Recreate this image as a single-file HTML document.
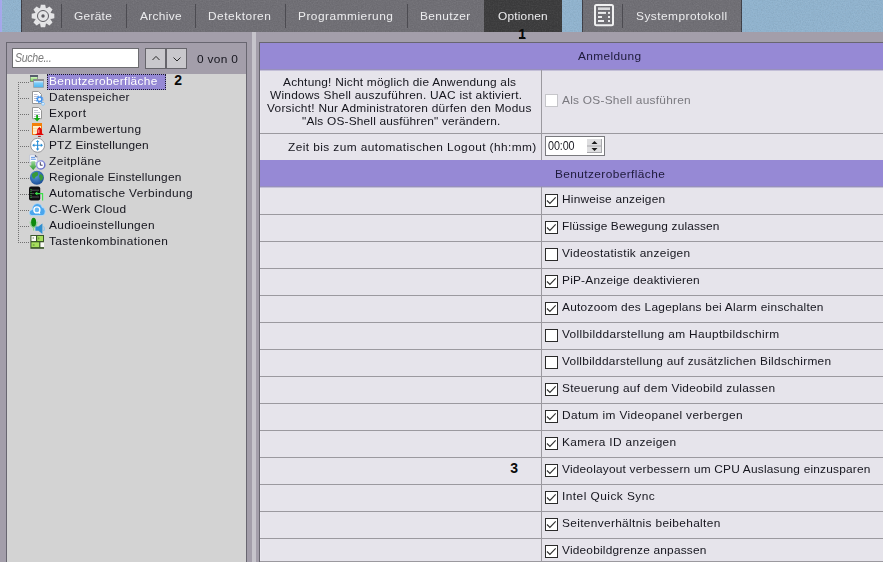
<!DOCTYPE html>
<html><head><meta charset="utf-8">
<style>
html,body{margin:0;padding:0;}
body{width:883px;height:562px;overflow:hidden;position:relative;background:#a39eaa;font-family:"Liberation Sans",sans-serif;font-size:11px;color:#15151d;}
div,span,svg{position:absolute;box-sizing:border-box;white-space:nowrap;}
.blue{top:0;height:32px;background:#91b4cf;}
.bar{top:0;height:32px;background:#706f75;}
.sep{top:4px;width:1px;height:24px;background:#4c4b51;}
.tab{line-height:16px;color:#ececee;}
.ti{line-height:16px;}
.hl{left:18px;width:12px;height:1px;background:repeating-linear-gradient(90deg,#707070 0 1px,transparent 1px 2px);}
.hdr{left:260px;width:640px;height:28px;background:linear-gradient(#9689d5 0,#9689d5 26px,#9790bc 26px,#9790bc 27px,#c3bfd8 27px,#c3bfd8 28px);}
.ln{left:260px;width:640px;height:1px;background:#9b999f;}
.cb{left:545px;width:13px;height:13px;border:1px solid #2b2b2b;background:#fff;}
.lb{line-height:16px;}
.h{color:#1d1a3a;line-height:16px;}
.w{line-height:13px;}
#root{left:0;top:0;width:883px;height:562px;overflow:hidden;}
</style></head><body>
<div id="root">
<div style="left:0;top:0;width:2px;height:32px;background:linear-gradient(90deg,#a3a5ee,#a9aae8)"></div>
<div class="blue" style="left:2px;width:19px"></div>
<div class="bar" style="left:21px;width:463px;border-left:1px solid #3e3e46"></div>
<div style="left:484px;top:0;width:78px;height:32px;background:#3c3c3d"></div>
<div class="blue" style="left:562px;width:20px"></div>
<div class="bar" style="left:582px;width:160px;border-left:1px solid #3e3e46;border-right:1px solid #3e3e46"></div>
<div class="blue" style="left:742px;width:141px"></div>
<svg style="left:0;top:0" width="883" height="32"><filter id="nz" x="0" y="0" width="100%" height="100%"><feTurbulence type="fractalNoise" baseFrequency="0.75" numOctaves="2" seed="7"/><feColorMatrix type="matrix" values="0 0 0 0 0  0 0 0 0 0  0 0 0 0 0  1.6 0 0 0 -0.62"/></filter><filter id="nw" x="0" y="0" width="100%" height="100%"><feTurbulence type="fractalNoise" baseFrequency="0.75" numOctaves="2" seed="23"/><feColorMatrix type="matrix" values="0 0 0 0 1  0 0 0 0 1  0 0 0 0 1  1.6 0 0 0 -0.62"/></filter><rect x="2" width="881" height="32" filter="url(#nz)" opacity="0.08"/><rect x="2" width="881" height="32" filter="url(#nw)" opacity="0.08"/></svg>
<div class="sep" style="left:61px"></div>
<div class="sep" style="left:126px"></div>
<div class="sep" style="left:195px"></div>
<div class="sep" style="left:285px"></div>
<div class="sep" style="left:407px"></div>
<div class="sep" style="left:622px"></div>
<svg style="left:30px;top:3px" width="26" height="26" viewBox="-13 -13 26 26">
<g fill="#e4e4e6"><circle r="8.4"/>
<path d="M-2.9 -7.8 L-2.2 -11.3 L2.2 -11.3 L2.9 -7.8 Z" transform="rotate(0)"/>
<path d="M-2.9 -7.8 L-2.2 -11.3 L2.2 -11.3 L2.9 -7.8 Z" transform="rotate(45)"/>
<path d="M-2.9 -7.8 L-2.2 -11.3 L2.2 -11.3 L2.9 -7.8 Z" transform="rotate(90)"/>
<path d="M-2.9 -7.8 L-2.2 -11.3 L2.2 -11.3 L2.9 -7.8 Z" transform="rotate(135)"/>
<path d="M-2.9 -7.8 L-2.2 -11.3 L2.2 -11.3 L2.9 -7.8 Z" transform="rotate(180)"/>
<path d="M-2.9 -7.8 L-2.2 -11.3 L2.2 -11.3 L2.9 -7.8 Z" transform="rotate(225)"/>
<path d="M-2.9 -7.8 L-2.2 -11.3 L2.2 -11.3 L2.9 -7.8 Z" transform="rotate(270)"/>
<path d="M-2.9 -7.8 L-2.2 -11.3 L2.2 -11.3 L2.9 -7.8 Z" transform="rotate(315)"/></g>
<circle r="5.5" fill="none" stroke="#5d5c62" stroke-width="1"/><circle r="1.7" fill="#5d5c62"/></svg>
<svg style="left:593px;top:3px" width="22" height="24" viewBox="0 0 22 24">
<rect x="2" y="2" width="18" height="20.3" rx="1.5" fill="none" stroke="#f0f0f1" stroke-width="2"/>
<rect x="5" y="4.4" width="12" height="2.6" fill="#d9d9db"/>
<rect x="5" y="8.9" width="8" height="2" fill="#ececee"/><rect x="15" y="8.9" width="2" height="2" fill="#ececee"/>
<rect x="5" y="13" width="4" height="2" fill="#ececee"/><rect x="15" y="13" width="2" height="2" fill="#ececee"/>
<rect x="5" y="17" width="6" height="2" fill="#ececee"/><rect x="15" y="17" width="2" height="2" fill="#ececee"/>
</svg>
<span class="m tab" style="left:74.4px;top:8px;letter-spacing:0.273px;transform:scaleX(1.08);transform-origin:0 0;">Geräte</span>
<span class="m tab" style="left:139.6px;top:8px;letter-spacing:0.301px;transform:scaleX(1.08);transform-origin:0 0;">Archive</span>
<span class="m tab" style="left:208.1px;top:8px;letter-spacing:0.489px;transform:scaleX(1.08);transform-origin:0 0;">Detektoren</span>
<span class="m tab" style="left:298.2px;top:8px;letter-spacing:0.458px;transform:scaleX(1.08);transform-origin:0 0;">Programmierung</span>
<span class="m tab" style="left:420.3px;top:8px;letter-spacing:0.341px;transform:scaleX(1.08);transform-origin:0 0;">Benutzer</span>
<span class="m tab" style="left:497.7px;top:8px;letter-spacing:0.182px;transform:scaleX(1.08);transform-origin:0 0;">Optionen</span>
<span class="m tab" style="left:635.8px;top:8px;letter-spacing:0.443px;transform:scaleX(1.08);transform-origin:0 0;">Systemprotokoll</span>
<span class="m " style="left:518.3px;top:27px;letter-spacing:0.000px;font-weight:bold;font-size:14px;line-height:14px;color:#0a0a0a">1</span>
<div style="left:519px;top:37px;width:6px;height:2px;background:#0a0a0a"></div>
<div style="left:6px;top:42px;width:241px;height:530px;border:1px solid #686670"></div>
<div style="left:7px;top:74px;width:239px;height:500px;background:#d3d3d3"></div>
<div style="left:12px;top:48px;width:127px;height:20px;border:1px solid #6c6c70;background:#fff"></div>
<span class="m " style="left:15.2px;top:49.5px;letter-spacing:-0.333px;transform:scaleX(0.88);transform-origin:0 0;font-style:italic;color:#7a7a7a;line-height:16px;font-size:12px">Suche...</span>
<div style="left:145px;top:48px;width:21px;height:21px;border:1px solid #66656b;background:#c9c8cc"><svg style="left:-1px;top:-1px" width="21" height="21"><path d="M7.5 12 L11 8.4 L14.5 12" fill="none" stroke="#2a2a2a" stroke-width="1"/></svg></div>
<div style="left:166px;top:48px;width:21px;height:21px;border:1px solid #66656b;background:#c9c8cc"><svg style="left:-1px;top:-1px" width="21" height="21"><path d="M7.5 9.5 L11 13 L14.5 9.5" fill="none" stroke="#2a2a2a" stroke-width="1"/></svg></div>
<span class="m " style="left:197px;top:51px;letter-spacing:0.280px;transform:scaleX(1.08);transform-origin:0 0;line-height:16px">0 von 0</span>
<div style="left:18px;top:82px;width:1px;height:161px;background:repeating-linear-gradient(180deg,#707070 0 1px,transparent 1px 2px)"></div>
<div class="hl" style="top:82px"></div>
<div class="hl" style="top:98px"></div>
<div class="hl" style="top:114px"></div>
<div class="hl" style="top:130px"></div>
<div class="hl" style="top:146px"></div>
<div class="hl" style="top:162px"></div>
<div class="hl" style="top:178px"></div>
<div class="hl" style="top:194px"></div>
<div class="hl" style="top:210px"></div>
<div class="hl" style="top:226px"></div>
<div class="hl" style="top:242px"></div>
<div style="left:47px;top:74px;width:119px;height:16px;background:#9689d5;border:1px dotted #1a1a2a"></div>
<span class="m ti" style="left:49px;top:73px;letter-spacing:0.286px;transform:scaleX(1.08);transform-origin:0 0;color:#fff">Benutzeroberfläche</span>
<span class="m ti" style="left:49px;top:89px;letter-spacing:0.305px;transform:scaleX(1.08);transform-origin:0 0;">Datenspeicher</span>
<span class="m ti" style="left:49px;top:105px;letter-spacing:0.488px;transform:scaleX(1.08);transform-origin:0 0;">Export</span>
<span class="m ti" style="left:49px;top:121px;letter-spacing:0.403px;transform:scaleX(1.08);transform-origin:0 0;">Alarmbewertung</span>
<span class="m ti" style="left:49px;top:137px;letter-spacing:0.148px;transform:scaleX(1.08);transform-origin:0 0;">PTZ Einstellungen</span>
<span class="m ti" style="left:49px;top:153px;letter-spacing:0.361px;transform:scaleX(1.08);transform-origin:0 0;">Zeitpläne</span>
<span class="m ti" style="left:49px;top:169px;letter-spacing:0.175px;transform:scaleX(1.08);transform-origin:0 0;">Regionale Einstellungen</span>
<span class="m ti" style="left:49px;top:185px;letter-spacing:0.342px;transform:scaleX(1.08);transform-origin:0 0;">Automatische Verbindung</span>
<span class="m ti" style="left:49px;top:201px;letter-spacing:0.225px;transform:scaleX(1.08);transform-origin:0 0;">C-Werk Cloud</span>
<span class="m ti" style="left:49px;top:217px;letter-spacing:0.277px;transform:scaleX(1.08);transform-origin:0 0;">Audioeinstellungen</span>
<span class="m ti" style="left:49px;top:233px;letter-spacing:0.342px;transform:scaleX(1.08);transform-origin:0 0;">Tastenkombinationen</span>
<span class="m " style="left:174.3px;top:72px;letter-spacing:0.000px;font-weight:bold;font-size:14px;line-height:16px;color:#0a0a0a">2</span>
<svg style="left:28px;top:74px" width="20" height="178" viewBox="28 74 20 178">
<defs>
<linearGradient id="gb" x1="0" y1="0" x2="0" y2="1"><stop offset="0" stop-color="#e2f4ff"/><stop offset="0.3" stop-color="#7fccf8"/><stop offset="1" stop-color="#4fb6ee"/></linearGradient><linearGradient id="gw" x1="0" y1="0" x2="0" y2="1"><stop offset="0" stop-color="#d4f5c0"/><stop offset="1" stop-color="#74d850"/></linearGradient>
<radialGradient id="gg" cx="0.4" cy="0.35" r="0.7"><stop offset="0" stop-color="#5a9fe2"/><stop offset="1" stop-color="#174890"/></radialGradient>
<linearGradient id="ga" x1="0" y1="0" x2="0" y2="1"><stop offset="0" stop-color="#9ad89a"/><stop offset="1" stop-color="#2e9a2e"/></linearGradient>
<linearGradient id="gc" x1="0" y1="0" x2="1" y2="1"><stop offset="0" stop-color="#a9aee8"/><stop offset="1" stop-color="#5a62c2"/></linearGradient>
</defs>
<!-- 1 windows -->
<rect x="30" y="75" width="8" height="7" fill="#7e8b7d"/><rect x="30" y="75" width="8" height="2" fill="#565d6c"/><rect x="30.8" y="77" width="6.4" height="4" fill="url(#gw)"/>
<rect x="33.3" y="79" width="10.5" height="8.7" fill="#8794a3"/><rect x="33.3" y="79" width="10.5" height="2.1" fill="#8b8b90"/><rect x="34" y="81.1" width="9.1" height="6" fill="url(#gb)"/>
<!-- 2 doc+gear -->
<path d="M32.5 91.5 H38.5 L41.5 94.5 V103.5 H32.5 Z" fill="#fff" stroke="#8c8c8c" stroke-width="0.9"/>
<path d="M34 94.5 H37.5 M34 96.5 H38 M34 98.5 H36.5 M34 100.5 H36.5" stroke="#a9afc4" stroke-width="0.8"/>
<circle cx="39.6" cy="99.3" r="3.3" fill="none" stroke="#4f9cf0" stroke-width="1.1" stroke-dasharray="1.3 1.3"/>
<circle cx="39.6" cy="99.3" r="2.2" fill="#eef7ff" stroke="#3f8fec" stroke-width="1.3"/>
<circle cx="43" cy="103.8" r="1.4" fill="#eef7ff" stroke="#7fc0f6" stroke-width="0.9"/>
<path d="M41.5 101.5 L42.3 102.6" stroke="#5aa6f0" stroke-width="1.2"/>
<!-- 3 export -->
<path d="M32.5 107.5 H38.5 L41.5 110.5 V118.7 H32.5 Z" fill="#fff" stroke="#8c8c8c" stroke-width="0.9"/>
<path d="M34 110.5 H38 M34 112.5 H40 M34 114.5 H40 M34 116.5 H40" stroke="#b4b9c8" stroke-width="0.8"/>
<path d="M36.2 114.9 H38 V118.1 H40.3 L37.1 121.5 L33.9 118.1 H36.2 Z" fill="#12aa12"/>
<!-- 4 alarm -->
<rect x="32" y="123" width="10" height="11.9" fill="#ec7a10"/><rect x="32" y="123" width="10" height="2.9" fill="#f48008"/><rect x="33" y="126" width="8" height="8" fill="#fff0c8"/>
<path d="M33 128.5 H37 M33 131 H37" stroke="#fbd69a" stroke-width="0.8"/>
<path d="M39.4 126.7 L40.1 127.8 C41.4 128.2 41.9 129.4 41.9 130.8 V133.2 L44 134.9 H35 L37.2 133.2 V130.8 C37.2 129.4 37.6 128.2 38.7 127.8 Z" fill="#e00808"/>
<rect x="38.4" y="129.6" width="0.9" height="3.4" fill="#ffc4c4"/>
<rect x="38" y="135.9" width="2.8" height="1" fill="#a81818"/>
<!-- 5 ptz -->
<circle cx="37.6" cy="145.3" r="7" fill="#fff" stroke="#8d8d92" stroke-width="0.9"/>
<path d="M33.2 145.3 H42 M37.6 140.9 V149.7" stroke="#2b8fd6" stroke-width="1.1"/>
<path d="M32.2 145.3 L34.4 143.6 V147 Z M43 145.3 L40.8 143.6 V147 Z M37.6 139.9 L35.9 142.1 H39.3 Z M37.6 150.7 L35.9 148.5 H39.3 Z" fill="#2b8fd6"/>
<!-- 6 zeitplaene -->
<path d="M29.8 155 H35.4 L37.2 156.8 V162.5 H29.8 Z" fill="#fff" stroke="#b4bcd6" stroke-width="0.7"/><path d="M35.4 155 V156.8 H37.2" fill="none" stroke="#3a4060" stroke-width="0.8"/>
<path d="M31 157.3 H35 M31 159.2 H35.8" stroke="#3f7fe0" stroke-width="0.9"/>
<path d="M31.3 161.3 H35.2 V165.4 H37.2 L33.2 170 L29.3 165.4 H31.3 Z" fill="url(#ga)"/>
<circle cx="40.7" cy="164.9" r="4.1" fill="#fdfdff" stroke="url(#gc)" stroke-width="1.5"/>
<path d="M40.3 162.2 V165.2 H42.6" fill="none" stroke="#26264e" stroke-width="0.9"/>
<!-- 7 globe -->
<circle cx="36.9" cy="177.8" r="7" fill="url(#gg)"/>
<path d="M32.6 173.6 C34 172.2 36.4 171.6 37.8 172.2 C37.4 173.4 38.8 174 37.8 175.4 C36.6 176.6 35.4 176.2 35 178 C34.6 179.4 33.4 178.6 32.6 177.4 C31.6 176 31.8 174.6 32.6 173.6 Z" fill="#379a3a"/>
<path d="M39.8 174.4 C41.2 174 42.8 175.4 43.2 177 C43.2 178.8 42 180.4 40.6 180.8 C39.6 179.8 40.2 178.4 39.4 177.4 C38.8 176.4 39 175 39.8 174.4 Z" fill="#379a3a"/>
<!-- 8 server -->
<rect x="29" y="186.6" width="11.2" height="14" rx="2" fill="#0e0e10"/>
<path d="M30.5 190.2 H39 M30.5 193.6 H34 M30.5 197 H39" stroke="#5a5a5e" stroke-width="0.9"/>
<path d="M31 189 V199" stroke="#2fd43a" stroke-width="0.9" stroke-dasharray="1 1"/>
<path d="M42.6 200.4 V193.6 H36.5" fill="none" stroke="#38e048" stroke-width="1.1"/>
<path d="M34.6 193.6 L37.4 191.6 V195.6 Z" fill="#38e048"/>
<!-- 9 cloud -->
<path d="M32.2 215.6 C30.2 215.6 29.2 214 29.4 212.4 C29.6 210.8 30.8 209.8 32.2 209.8 C32.2 206.6 34.4 203.6 37.4 203.6 C39.8 203.6 41.6 205.2 42.2 207.6 C44 207.6 45.2 209.4 45.2 211.6 C45.2 214 43.8 215.6 42 215.6 Z" fill="#4aa6ee" stroke="#b5dcfb" stroke-width="0.9"/>
<circle cx="36.9" cy="209.9" r="3" fill="#6ab8f2" stroke="#fff" stroke-width="1.4"/>
<path d="M38.8 212 L40 213.6" stroke="#fff" stroke-width="1.2"/>
<!-- 10 audio -->
<path d="M30.2 221.5 C30.2 226.5 32.2 227.6 33.6 227.6 C35 227.6 37 226.5 37 221.5 M33.6 227.6 V230.6" fill="none" stroke="#7fd87f" stroke-width="1"/>
<ellipse cx="33.6" cy="222.3" rx="2.5" ry="4.5" fill="#0d8a0d"/>
<path d="M35.4 226.6 H38.4 L42.4 223.4 V234 L38.4 230.8 H35.4 Z" fill="#2f8fd0"/>
<path d="M43.6 226.4 C44.6 227.8 44.6 229.6 43.6 231" fill="none" stroke="#7fc0ee" stroke-width="1"/>
<!-- 11 tasten -->
<rect x="30.4" y="235" width="13.6" height="13.8" fill="#3b572b"/>
<rect x="31.4" y="236" width="4.6" height="5" fill="#fbfbf6"/><rect x="37.2" y="236" width="5.8" height="5" fill="#a6e05c"/>
<rect x="31.4" y="242.3" width="7.8" height="4.8" fill="#a6e05c"/><rect x="40.4" y="242.3" width="3.6" height="4.8" fill="#fbfbf6"/>
<path d="M32.6 238 H34 M38.8 237.4 V239.4 M32.8 245 H34.6" stroke="#47662f" stroke-width="0.8"/>
</svg>

<div style="left:252px;top:32px;width:4px;height:540px;background:#c6c4cb"></div>
<div style="left:259px;top:42px;width:640px;height:540px;border:1px solid #686670;background:#e6e4eb"></div>
<div style="left:260px;top:70px;width:1px;height:500px;background:#ebe9f0"></div>
<div class="hdr" style="top:43px"></div>
<div class="hdr" style="top:160px"></div>
<div style="left:541px;top:70px;width:1px;height:90px;background:#9b999f"></div>
<div style="left:541px;top:187px;width:1px;height:400px;background:#9b999f"></div>
<div class="ln" style="top:133px"></div>
<span class="m h" style="left:578px;top:48px;letter-spacing:0.359px;transform:scaleX(1.08);transform-origin:0 0;">Anmeldung</span>
<span class="m h" style="left:555.4px;top:166px;letter-spacing:0.368px;transform:scaleX(1.08);transform-origin:0 0;">Benutzeroberfläche</span>
<span class="m w" style="left:283px;top:76px;letter-spacing:0.200px;transform:scaleX(1.08);transform-origin:0 0;">Achtung! Nicht möglich die Anwendung als</span>
<span class="m w" style="left:270.3px;top:89px;letter-spacing:0.234px;transform:scaleX(1.08);transform-origin:0 0;">Windows Shell auszuführen. UAC ist aktiviert.</span>
<span class="m w" style="left:267.2px;top:102px;letter-spacing:0.235px;transform:scaleX(1.08);transform-origin:0 0;">Vorsicht! Nur Administratoren dürfen den Modus</span>
<span class="m w" style="left:301.6px;top:114.6px;letter-spacing:0.174px;transform:scaleX(1.08);transform-origin:0 0;">&quot;Als OS-Shell ausführen&quot; verändern.</span>
<span class="m lb" style="left:287.8px;top:139px;letter-spacing:0.383px;transform:scaleX(1.08);transform-origin:0 0;">Zeit bis zum automatischen Logout (hh:mm)</span>
<div class="cb" style="top:94px;border-color:#c6c6ca"></div>
<span class="m lb" style="left:561.5px;top:92px;letter-spacing:0.228px;transform:scaleX(1.08);transform-origin:0 0;color:#7a797f">Als OS-Shell ausführen</span>
<div style="left:545px;top:136px;width:60px;height:20px;border:1px solid #7a7a7e;background:#fff"></div>
<span class="m " style="left:547.5px;top:138px;letter-spacing:-0.117px;transform:scaleX(0.9);transform-origin:0 0;line-height:16px;font-size:12px;color:#1a1a22">00:00</span>
<svg style="left:587px;top:139px" width="15" height="14"><rect width="15" height="14" fill="#dedee0"/><rect x="0" y="6.5" width="15" height="1" fill="#a8a8ac"/><rect x="14" y="0" width="1" height="14" fill="#a8a8ac"/><rect x="0" y="13" width="15" height="1" fill="#a8a8ac"/>
<path d="M4.5 5 L7.5 2 L10.5 5 Z M4.5 9 L7.5 12 L10.5 9 Z" fill="#1a1a1a"/></svg>
<div class="ln" style="top:214px"></div>
<div class="cb" style="top:194px"><svg width="11" height="11" style="left:0;top:0"><path d="M1 5.5 L3.9 8.4 L9.7 2.3" fill="none" stroke="#303030" stroke-width="1.15"/></svg></div>
<span class="m lb" style="left:561.8px;top:191px;letter-spacing:0.194px;transform:scaleX(1.08);transform-origin:0 0;">Hinweise anzeigen</span>
<div class="ln" style="top:241px"></div>
<div class="cb" style="top:221px"><svg width="11" height="11" style="left:0;top:0"><path d="M1 5.5 L3.9 8.4 L9.7 2.3" fill="none" stroke="#303030" stroke-width="1.15"/></svg></div>
<span class="m lb" style="left:561.8px;top:218px;letter-spacing:0.132px;transform:scaleX(1.08);transform-origin:0 0;">Flüssige Bewegung zulassen</span>
<div class="ln" style="top:268px"></div>
<div class="cb" style="top:248px"></div>
<span class="m lb" style="left:561.8px;top:245px;letter-spacing:0.285px;transform:scaleX(1.08);transform-origin:0 0;">Videostatistik anzeigen</span>
<div class="ln" style="top:295px"></div>
<div class="cb" style="top:275px"><svg width="11" height="11" style="left:0;top:0"><path d="M1 5.5 L3.9 8.4 L9.7 2.3" fill="none" stroke="#303030" stroke-width="1.15"/></svg></div>
<span class="m lb" style="left:561.8px;top:272px;letter-spacing:0.195px;transform:scaleX(1.08);transform-origin:0 0;">PiP-Anzeige deaktivieren</span>
<div class="ln" style="top:322px"></div>
<div class="cb" style="top:302px"><svg width="11" height="11" style="left:0;top:0"><path d="M1 5.5 L3.9 8.4 L9.7 2.3" fill="none" stroke="#303030" stroke-width="1.15"/></svg></div>
<span class="m lb" style="left:561.8px;top:299px;letter-spacing:0.240px;transform:scaleX(1.08);transform-origin:0 0;">Autozoom des Lageplans bei Alarm einschalten</span>
<div class="ln" style="top:349px"></div>
<div class="cb" style="top:329px"></div>
<span class="m lb" style="left:561.8px;top:326px;letter-spacing:0.330px;transform:scaleX(1.08);transform-origin:0 0;">Vollbilddarstellung am Hauptbildschirm</span>
<div class="ln" style="top:376px"></div>
<div class="cb" style="top:356px"></div>
<span class="m lb" style="left:561.8px;top:353px;letter-spacing:0.261px;transform:scaleX(1.08);transform-origin:0 0;">Vollbilddarstellung auf zusätzlichen Bildschirmen</span>
<div class="ln" style="top:403px"></div>
<div class="cb" style="top:383px"><svg width="11" height="11" style="left:0;top:0"><path d="M1 5.5 L3.9 8.4 L9.7 2.3" fill="none" stroke="#303030" stroke-width="1.15"/></svg></div>
<span class="m lb" style="left:561.8px;top:380px;letter-spacing:0.260px;transform:scaleX(1.08);transform-origin:0 0;">Steuerung auf dem Videobild zulassen</span>
<div class="ln" style="top:430px"></div>
<div class="cb" style="top:410px"><svg width="11" height="11" style="left:0;top:0"><path d="M1 5.5 L3.9 8.4 L9.7 2.3" fill="none" stroke="#303030" stroke-width="1.15"/></svg></div>
<span class="m lb" style="left:561.8px;top:407px;letter-spacing:0.343px;transform:scaleX(1.08);transform-origin:0 0;">Datum im Videopanel verbergen</span>
<div class="ln" style="top:457px"></div>
<div class="cb" style="top:437px"><svg width="11" height="11" style="left:0;top:0"><path d="M1 5.5 L3.9 8.4 L9.7 2.3" fill="none" stroke="#303030" stroke-width="1.15"/></svg></div>
<span class="m lb" style="left:561.8px;top:434px;letter-spacing:0.319px;transform:scaleX(1.08);transform-origin:0 0;">Kamera ID anzeigen</span>
<div class="ln" style="top:484px"></div>
<div class="cb" style="top:464px"><svg width="11" height="11" style="left:0;top:0"><path d="M1 5.5 L3.9 8.4 L9.7 2.3" fill="none" stroke="#303030" stroke-width="1.15"/></svg></div>
<span class="m lb" style="left:561.8px;top:461px;letter-spacing:0.187px;transform:scaleX(1.08);transform-origin:0 0;">Videolayout verbessern um CPU Auslasung einzusparen</span>
<div class="ln" style="top:511px"></div>
<div class="cb" style="top:491px"><svg width="11" height="11" style="left:0;top:0"><path d="M1 5.5 L3.9 8.4 L9.7 2.3" fill="none" stroke="#303030" stroke-width="1.15"/></svg></div>
<span class="m lb" style="left:561.8px;top:488px;letter-spacing:0.426px;transform:scaleX(1.08);transform-origin:0 0;">Intel Quick Sync</span>
<div class="ln" style="top:538px"></div>
<div class="cb" style="top:518px"><svg width="11" height="11" style="left:0;top:0"><path d="M1 5.5 L3.9 8.4 L9.7 2.3" fill="none" stroke="#303030" stroke-width="1.15"/></svg></div>
<span class="m lb" style="left:561.8px;top:515px;letter-spacing:0.308px;transform:scaleX(1.08);transform-origin:0 0;">Seitenverhältnis beibehalten</span>
<div class="ln" style="top:565px"></div>
<div class="cb" style="top:545px"><svg width="11" height="11" style="left:0;top:0"><path d="M1 5.5 L3.9 8.4 L9.7 2.3" fill="none" stroke="#303030" stroke-width="1.15"/></svg></div>
<span class="m lb" style="left:561.8px;top:542px;letter-spacing:0.184px;transform:scaleX(1.08);transform-origin:0 0;">Videobildgrenze anpassen</span>
<div class="ln" style="top:561px"></div>
<span class="m " style="left:510.3px;top:460px;letter-spacing:0.000px;font-weight:bold;font-size:14px;line-height:16px;color:#0a0a0a">3</span>
</div>
</body></html>
